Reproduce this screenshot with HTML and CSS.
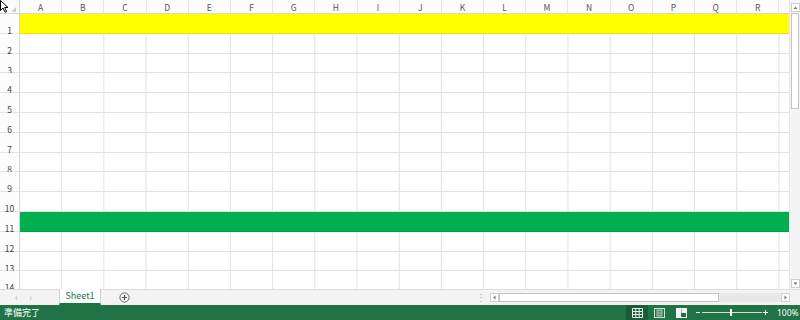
FILE: index.html
```html
<html lang="ja">

<head>
  <meta charset="UTF-8">
  <title>Book1 - Excel</title>
  <link rel="stylesheet" href="styles.css">
</head>

<body>
  <div id="app">
    <svg class="cursor" width="10" height="13" viewBox="0 0 10 13">
      <path d="M0.5 0.5 L0.5 10.5 L3 8 L5 12.2 L6.6 11.4 L4.7 7.5 L8 7.5 Z" fill="#fff" stroke="#000" stroke-width="1" />
    </svg>

    <div class="sheet">
      <div class="grid">
        <div class="colhead">
          <div class="corner">
            <svg width="20" height="14" viewBox="0 0 20 14"><path d="M17 7 L17 12 L12 12 Z" fill="#c6c6c6" /></svg>
          </div>
          <div class="col">A</div>
          <div class="col">B</div>
          <div class="col">C</div>
          <div class="col">D</div>
          <div class="col">E</div>
          <div class="col">F</div>
          <div class="col">G</div>
          <div class="col">H</div>
          <div class="col">I</div>
          <div class="col">J</div>
          <div class="col">K</div>
          <div class="col">L</div>
          <div class="col">M</div>
          <div class="col">N</div>
          <div class="col">O</div>
          <div class="col">P</div>
          <div class="col">Q</div>
          <div class="col">R</div>
          <div class="col"></div>
        </div>
        <div class="row"><div class="rh">1</div><div class="cells yellow"></div></div>
        <div class="row"><div class="rh">2</div><div class="cells"></div></div>
        <div class="row"><div class="rh">3</div><div class="cells"></div></div>
        <div class="row"><div class="rh">4</div><div class="cells"></div></div>
        <div class="row"><div class="rh">5</div><div class="cells"></div></div>
        <div class="row"><div class="rh">6</div><div class="cells"></div></div>
        <div class="row"><div class="rh">7</div><div class="cells"></div></div>
        <div class="row"><div class="rh">8</div><div class="cells"></div></div>
        <div class="row"><div class="rh">9</div><div class="cells"></div></div>
        <div class="row"><div class="rh">10</div><div class="cells"></div></div>
        <div class="row"><div class="rh">11</div><div class="cells green"></div></div>
        <div class="row"><div class="rh">12</div><div class="cells"></div></div>
        <div class="row"><div class="rh">13</div><div class="cells"></div></div>
        <div class="row"><div class="rh">14</div><div class="cells"></div></div>
      </div>

      <div class="vscroll">
        <div class="sbtn">
          <svg width="9" height="9" viewBox="0 0 9 9"><path d="M2.5 6 L4.5 3.5 L6.5 6 Z" fill="#777" /></svg>
        </div>
        <div class="vthumb"></div>
        <div class="vtrack"></div>
        <div class="sbtn">
          <svg width="9" height="9" viewBox="0 0 9 9"><path d="M2.5 3.5 L4.5 6 L6.5 3.5 Z" fill="#777" /></svg>
        </div>
      </div>
    </div>

    <div class="tabbar">
      <div class="tabnav">
        <span>&#8249;</span>
        <span>&#8250;</span>
      </div>
      <div class="tab">Sheet1</div>
      <div class="addsheet">
        <svg width="11" height="11" viewBox="0 0 11 11">
          <circle cx="5.5" cy="5.5" r="4.6" fill="none" stroke="#666" stroke-width="1" />
          <path d="M5.5 3 L5.5 8 M3 5.5 L8 5.5" stroke="#555" stroke-width="1.2" />
        </svg>
      </div>
      <div class="splitter">&#8942;</div>
      <div class="hscroll">
        <div class="sbtn">
          <svg width="9" height="9" viewBox="0 0 9 9"><path d="M5.5 2.5 L3 4.5 L5.5 6.5 Z" fill="#777" /></svg>
        </div>
        <div class="hthumb"></div>
        <div class="htrack"></div>
        <div class="sbtn">
          <svg width="9" height="9" viewBox="0 0 9 9"><path d="M3.5 2.5 L6 4.5 L3.5 6.5 Z" fill="#777" /></svg>
        </div>
      </div>
    </div>

    <div class="status">
      <span class="ready">準備完了</span>
      <div class="views">
        <div class="view active">
          <svg width="11" height="10" viewBox="0 0 11 10">
            <path d="M0.5 0.5 H10.5 V9.5 H0.5 Z M0.5 3.5 H10.5 M0.5 6.5 H10.5 M3.8 0.5 V9.5 M7.2 0.5 V9.5" fill="none" stroke="#e8f0ea" stroke-width="1" />
          </svg>
        </div>
        <div class="view">
          <svg width="11" height="10" viewBox="0 0 11 10">
            <rect x="0.5" y="0.5" width="10" height="9" fill="none" stroke="#cfe0d5" />
            <rect x="2.5" y="1.5" width="6" height="7" fill="#9fbfaa" />
            <path d="M3.5 3.5 H7.5 M3.5 5 H7.5 M3.5 6.5 H7.5" stroke="#5c8f6d" />
          </svg>
        </div>
        <div class="view">
          <svg width="11" height="10" viewBox="0 0 11 10">
            <rect x="0.5" y="0.5" width="10" height="9" fill="none" stroke="#f2f6f3" />
            <rect x="1" y="1" width="4" height="8" fill="#f2f6f3" />
            <rect x="5.5" y="1" width="4.5" height="4" fill="#f2f6f3" />
          </svg>
        </div>
      </div>
      <div class="zoom">
        <span class="zminus"></span>
        <div class="zline"><span class="zknob"></span></div>
        <span class="zplus"></span>
        <span class="zval">100%</span>
      </div>
    </div>
  </div>
</body>

</html>
```

FILE: styles.css
```css
body {
  margin: 0;
  font-family: "Noto Sans CJK JP", "Noto Sans", sans-serif;
  background-color: #fff;
}

#app {
  position: relative;
  width: 800px;
  height: 320px;
  display: flex;
  flex-direction: column;
  overflow: hidden;
}

.cursor {
  position: absolute;
  top: 0;
  left: 0;
  z-index: 5;
}

.sheet {
  height: 290px;
  display: flex;
  overflow: hidden;
}

.grid {
  width: 789px;
  overflow: hidden;
}

.colhead {
  height: 14px;
  display: flex;
  box-sizing: border-box;
  border-bottom: 1px solid #d5d5d5;
  background-color: #fcfcfc;
}

.corner {
  width: 20px;
  flex: none;
  box-sizing: border-box;
  border-right: 1px solid #d5d5d5;
  display: flex;
}

.col {
  width: 42.2px;
  flex: none;
  box-sizing: border-box;
  border-right: 1px solid #e3e3e3;
  font-size: 8.5px;
  line-height: 14px;
  color: #555;
  text-align: center;
}

.row {
  height: 19.8px;
  display: flex;
}

.rh {
  width: 20px;
  flex: none;
  box-sizing: border-box;
  border-right: 1px solid #d5d5d5;
  border-bottom: 1px solid #e3e3e3;
  background-color: #fcfcfc;
  font-size: 8.5px;
  color: #444;
  display: flex;
  align-items: flex-start;
  justify-content: center;
  padding-top: 12px;
  line-height: 8px;
}

.cells {
  flex: 1;
  box-sizing: border-box;
  border-bottom: 1px solid #e1e1e1;
  background-image: linear-gradient(to left, #e1e1e1 1px, transparent 1px);
  background-size: 42.2px 100%;
}

.cells.yellow {
  background: #ffff00;
  border-bottom-color: #e6e600;
}

.cells.green {
  background: #00b050;
  border-bottom-color: #00a048;
}

.vscroll {
  width: 11px;
  box-sizing: border-box;
  padding: 3px 1px 1px 1px;
  background-color: #f4f4f4;
  border-left: 1px solid #e6e6e6;
  display: flex;
  flex-direction: column;
}

.sbtn {
  width: 9px;
  height: 9px;
  flex: none;
  box-sizing: border-box;
  border: 1px solid #cfcfcf;
  background-color: #fff;
  display: flex;
  align-items: center;
  justify-content: center;
}

.sbtn svg {
  flex: none;
}

.vthumb {
  height: 96px;
  margin-top: 1px;
  box-sizing: border-box;
  border: 1px solid #c4c4c4;
  background-color: #fff;
}

.vtrack {
  flex: 1;
}

.tabbar {
  height: 16px;
  display: flex;
  align-items: stretch;
  background-color: #f3f3f3;
  border-top: 1px solid #dcdcdc;
  box-sizing: border-box;
}

.tabnav {
  width: 59px;
  display: flex;
  gap: 11px;
  padding-left: 15px;
  box-sizing: border-box;
  color: #b8b8b8;
  font-size: 10px;
  line-height: 13px;
}

.tab {
  width: 42px;
  box-sizing: border-box;
  background-color: #fff;
  border-left: 1px solid #d0d0d0;
  border-right: 1px solid #d0d0d0;
  border-bottom: 2px solid #217346;
  color: #217346;
  font-size: 9px;
  line-height: 13px;
  text-align: center;
  margin-top: -1px;
}

.addsheet {
  width: 11px;
  margin-left: 18px;
  display: flex;
  align-items: center;
}

.splitter {
  margin-left: 346px;
  width: 8px;
  color: #aaa;
  font-size: 10px;
  line-height: 14px;
}

.hscroll {
  margin-left: 6px;
  width: 300px;
  display: flex;
  align-items: center;
}

.hthumb {
  width: 220px;
  height: 9px;
  box-sizing: border-box;
  border: 1px solid #c4c4c4;
  background-color: #fff;
}

.htrack {
  width: 62px;
  height: 9px;
  background-color: #e8e8e8;
}

.status {
  height: 15px;
  background-color: #217346;
  color: #fff;
  display: flex;
  align-items: center;
  font-size: 9px;
}

.ready {
  margin-left: 4px;
  line-height: 15px;
}

.views {
  margin-left: auto;
  display: flex;
  height: 15px;
}

.view {
  width: 22px;
  display: flex;
  align-items: center;
  justify-content: center;
}

.view.active {
  background-color: #1a5c38;
}

.zoom {
  display: flex;
  align-items: center;
  margin-left: 4px;
  margin-right: 3px;
}

.zminus {
  width: 4px;
  height: 1px;
  background-color: #fff;
}

.zline {
  position: relative;
  width: 60px;
  height: 1px;
  margin: 0 1px 0 2px;
  background-color: #cfe0d5;
}

.zknob {
  position: absolute;
  left: 28px;
  top: -3px;
  width: 2px;
  height: 7px;
  background-color: #fff;
}

.zplus {
  width: 5px;
  height: 5px;
  background:
    linear-gradient(#fff, #fff) center / 5px 1px no-repeat,
    linear-gradient(#fff, #fff) center / 1px 5px no-repeat;
}

.zval {
  width: 20px;
  margin-left: 9px;
  font-family: "Noto Sans", sans-serif;
  font-size: 8.5px;
  white-space: nowrap;
}
```
